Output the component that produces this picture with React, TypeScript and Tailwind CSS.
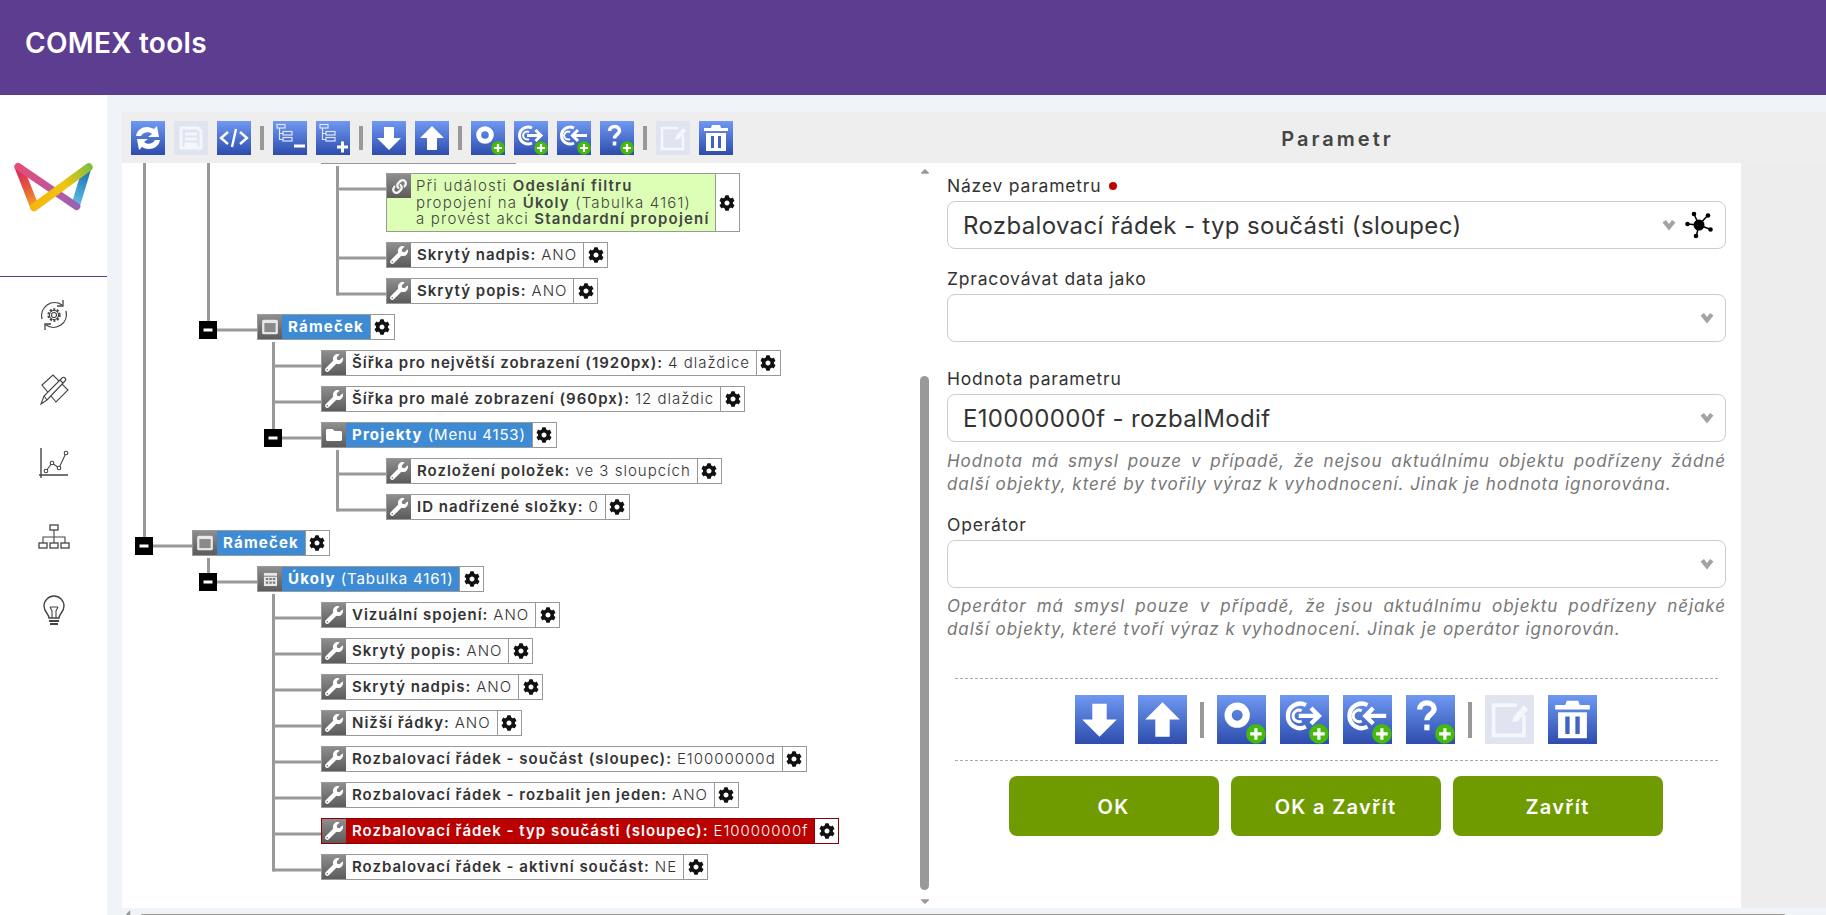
import type { ReactNode } from "react";
import { FaCog, FaWrench, FaLink, FaFolder, FaCaretUp, FaCaretDown, FaCaretLeft } from "react-icons/fa";

const FONT = "[font-family:Inter,'Noto_Sans',sans-serif]";

function Tool({ size = 34, disabled, children }: { size?: number; disabled?: boolean; children: ReactNode }) {
  return (
    <div
      className={
        disabled
          ? "shrink-0 bg-[#dfe4f0]"
          : "shrink-0 bg-gradient-to-b from-[#7099f2] to-[#2e4cad]"
      }
      style={{ width: size, height: size }}
    >
      <svg viewBox="0 0 34 34" width={size} height={size}>
        {children}
      </svg>
    </div>
  );
}

function Plus() {
  return (
    <g>
      <circle cx="27" cy="27" r="6.8" fill="#45b90c" />
      <path d="M27 23v8M23 27h8" stroke="#fff" strokeWidth="2.2" />
    </g>
  );
}

const Refresh = (
  <g fill="#fff">
    <path d="M5 15c1-6 6-9 11-9 3 0 5 1 7 2l3-3 2 11H17l4-3c-3-3-9-2-11 2z" />
    <path d="M29 19c-1 6-6 9-11 9-3 0-5-1-7-2l-3 3-2-11h11l-4 3c3 3 9 2 11-2z" />
  </g>
);
const Save = (
  <g fill="none" stroke="#f4f6fb" strokeWidth="3">
    <path d="M7 7h17l3 3v17H7z" />
    <path d="M11 13h12M11 18h12" />
    <path d="M12 27v-4h10v4" fill="#f4f6fb" />
  </g>
);
const Code = (
  <g fill="none" stroke="#fff" strokeWidth="2.4">
    <path d="M11 11l-7 6 7 6M23 11l7 6-7 6M19 8l-4 18" />
  </g>
);
const TreeBase = (
  <g fill="none" stroke="#dfe7fb" strokeWidth="1.2">
    <rect x="4" y="3.5" width="8" height="3.5" />
    <rect x="10" y="10.5" width="9" height="3.5" />
    <rect x="10" y="16.5" width="9" height="3.5" />
    <path d="M6.5 7v11.5H10M6.5 12.5H10" />
  </g>
);
const ArrowDown = <path d="M12 6h10v11h7L17 29 5 17h7z" fill="#fff" />;
const ArrowUp = <path d="M12 29h10V17h7L17 5 5 17h7z" fill="#fff" />;
const Ring = <circle cx="14" cy="14" r="6.300" fill="none" stroke="#fff" strokeWidth="5" />;
const RingRight = (
  <g fill="none" stroke="#fff" strokeWidth="3">
    <path d="M18 7a8.500 8.500 0 1 0 0 15" />
    <path d="M15 11a4 4 0 1 0 0 7" strokeWidth="2" />
    <path d="M13 14.500h14M21.500 9l5.500 5.500-5.500 5.500" />
  </g>
);
const RingLeft = (
  <g fill="none" stroke="#fff" strokeWidth="3">
    <path d="M17 7a8.500 8.500 0 1 0 0 15" />
    <path d="M13 11a4 4 0 1 0 0 7" strokeWidth="2" />
    <path d="M30 14.500H15M21 9l-5.500 5.500L21 20" />
  </g>
);
const Question = (
  <g fill="none" stroke="#fff" strokeWidth="3.600">
    <path d="M9.500 10c0-3 2.500-4.500 5-4.500s5 1.500 5 4.300c0 3.700-5 3.700-5 7.700" />
    <path d="M14.500 20.500v4" />
  </g>
);
const Edit = (
  <g fill="none" stroke="#f5f7fc" strokeWidth="2.500">
    <path d="M22 7H6v21h21V14" />
    <path d="M20 15l7-8 3 3-7 8-4 1z" fill="#f5f7fc" stroke="none" />
  </g>
);
const Trash = (
  <g fill="#fff">
    <path d="M13 4h8l1 3h7v3H5V7h7z" />
    <path d="M7 12h20v18H7z" />
    <path d="M12 15h3v12h-3zM19 15h3v12h-3z" fill="#3f63c3" />
  </g>
);

function TopToolbar() {
  return (
    <div className="flex w-[810px] items-center gap-[9px] pl-[9px]">
      <Tool>{Refresh}</Tool>
      <Tool disabled>{Save}</Tool>
      <Tool>{Code}</Tool>
      <div className="h-[24px] w-[4px] bg-[#999]" />
      <Tool>
        {TreeBase}
        <path d="M21 25h11" stroke="#fff" strokeWidth="3" />
      </Tool>
      <Tool>
        {TreeBase}
        <path d="M21 26h11M26.500 20.500v11" stroke="#fff" strokeWidth="3" />
      </Tool>
      <div className="h-[24px] w-[4px] bg-[#999]" />
      <Tool>{ArrowDown}</Tool>
      <Tool>{ArrowUp}</Tool>
      <div className="h-[24px] w-[4px] bg-[#999]" />
      <Tool>{Ring}<Plus /></Tool>
      <Tool>{RingRight}<Plus /></Tool>
      <Tool>{RingLeft}<Plus /></Tool>
      <Tool>{Question}<Plus /></Tool>
      <div className="h-[24px] w-[4px] bg-[#999]" />
      <Tool disabled>{Edit}</Tool>
      <Tool>{Trash}</Tool>
    </div>
  );
}

function FormToolbar() {
  return (
    <div className="flex items-center justify-center gap-[14px] py-[16px] pr-[2px]">
      <Tool size={49}>{ArrowDown}</Tool>
      <Tool size={49}>{ArrowUp}</Tool>
      <div className="mx-[-1px] h-[36px] w-[4px] bg-[#999]" />
      <Tool size={49}>{Ring}<Plus /></Tool>
      <Tool size={49}>{RingRight}<Plus /></Tool>
      <Tool size={49}>{RingLeft}<Plus /></Tool>
      <Tool size={49}>{Question}<Plus /></Tool>
      <div className="mx-[-1px] h-[36px] w-[4px] bg-[#999]" />
      <Tool size={49} disabled>{Edit}</Tool>
      <Tool size={49}>{Trash}</Tool>
    </div>
  );
}

function Logo() {
  return (
    <svg viewBox="40 215 240 155" width="80" height="52">
      <defs>
        <linearGradient id="lg-left" gradientUnits="userSpaceOnUse" x1="50" y1="225" x2="100" y2="355">
          <stop offset="0" stopColor="#d81f5d" />
          <stop offset="0.5" stopColor="#e4553f" />
          <stop offset="1" stopColor="#f7a823" />
        </linearGradient>
        <linearGradient id="lg-pink" gradientUnits="userSpaceOnUse" x1="50" y1="225" x2="230" y2="350">
          <stop offset="0" stopColor="#e94a78" />
          <stop offset="1" stopColor="#9a62b5" />
        </linearGradient>
        <linearGradient id="lg-right" gradientUnits="userSpaceOnUse" x1="265" y1="240" x2="225" y2="350">
          <stop offset="0" stopColor="#1c6fb5" />
          <stop offset="1" stopColor="#5fc6ea" />
        </linearGradient>
        <linearGradient id="lg-yellow" gradientUnits="userSpaceOnUse" x1="95" y1="350" x2="270" y2="225">
          <stop offset="0" stopColor="#f6b60d" />
          <stop offset="0.55" stopColor="#f1c40f" />
          <stop offset="1" stopColor="#7fbf3f" />
        </linearGradient>
      </defs>
      <path d="M54 228l48 122" stroke="url(#lg-left)" strokeWidth="26" fill="none" />
      <path d="M259 232l-35 116" stroke="url(#lg-right)" strokeWidth="26" fill="none" />
      <path d="M52 228l176 120" stroke="url(#lg-pink)" strokeWidth="22" fill="none" strokeLinecap="round" />
      <path d="M100 350l164-120" stroke="url(#lg-yellow)" strokeWidth="24" fill="none" strokeLinecap="round" />
    </svg>
  );
}

function SideIcon({ children }: { children: ReactNode }) {
  return (
    <svg viewBox="0 0 32 32" width="32" height="32" fill="none" stroke="#444" strokeWidth="1.100">
      {children}
    </svg>
  );
}

function Sidebar() {
  return (
    <aside className="flex w-[107px] shrink-0 flex-col bg-white">
      <div className="flex h-[182px] items-center justify-center border-b border-[#5c3d8f] pt-[4px]">
        <Logo />
      </div>
      <div className="flex flex-col items-center gap-[42px] pt-[22px]">
        <SideIcon>
          <path d="M4 20a13 13 0 0 1 20-14M28 12a13 13 0 0 1-20 14" strokeWidth="1.300" />
          <path d="M25 1v6h-6M7 31v-6h6" strokeWidth="1.300" />
          <circle cx="16" cy="16" r="2.500" />
          <circle cx="16" cy="16" r="5.500" strokeWidth="2.400" strokeDasharray="2 1.500" />
          <circle cx="16" cy="16" r="4.500" />
        </SideIcon>
        <SideIcon>
          <path d="M4 12l11-10 15 15-12 12z" />
          <path d="M3 31l3-8L24 5c2-2 5 1 3 3L9 27z" fill="#fff" />
          <path d="M22 7l3 3M6 23l3 4" />
        </SideIcon>
        <SideIcon>
          <path d="M3 1v30M1 28h29" strokeWidth="1.400" />
          <path d="M8 24l6-8 7 5 7-15" />
          <circle cx="8" cy="24" r="1.800" fill="#fff" />
          <circle cx="14" cy="16" r="1.800" fill="#fff" />
          <circle cx="21" cy="21" r="1.800" fill="#fff" />
          <circle cx="28" cy="6" r="1.800" fill="#fff" />
        </SideIcon>
        <SideIcon>
          <rect x="12" y="4" width="8" height="5" strokeWidth="1.300" />
          <rect x="1" y="22" width="8" height="5" strokeWidth="1.300" />
          <rect x="12" y="22" width="8" height="5" strokeWidth="1.300" />
          <rect x="23" y="22" width="8" height="5" strokeWidth="1.300" />
          <path d="M16 9v13M5 22v-6h22v6" />
        </SideIcon>
        <SideIcon>
          <path d="M11 23c0-4-5-6-5-12a10 10 0 0 1 20 0c0 6-5 8-5 12z" strokeWidth="1.400" />
          <path d="M12 12l2 4v7M20 12l-2 4v7M12 12h8" />
          <path d="M11 26h10M12 29h8" strokeWidth="2" />
        </SideIcon>
      </div>
    </aside>
  );
}

type Row = {
  ml: string;
  icon: "wrench" | "window" | "folder" | "table" | "link";
  label?: string;
  value?: string;
  blue?: boolean;
  red?: boolean;
  green?: boolean;
};

const rows: Row[] = [
  { ml: "ml-[264px]", icon: "link", green: true },
  { ml: "ml-[264px]", icon: "wrench", label: "Skrytý nadpis:", value: "ANO" },
  { ml: "ml-[264px]", icon: "wrench", label: "Skrytý popis:", value: "ANO" },
  { ml: "ml-[135px]", icon: "window", label: "Rámeček", blue: true },
  { ml: "ml-[199px]", icon: "wrench", label: "Šířka pro největší zobrazení (1920px):", value: "4 dlaždice" },
  { ml: "ml-[199px]", icon: "wrench", label: "Šířka pro malé zobrazení (960px):", value: "12 dlaždic" },
  { ml: "ml-[199px]", icon: "folder", label: "Projekty", value: "(Menu 4153)", blue: true },
  { ml: "ml-[264px]", icon: "wrench", label: "Rozložení položek:", value: "ve 3 sloupcích" },
  { ml: "ml-[264px]", icon: "wrench", label: "ID nadřízené složky:", value: "0" },
  { ml: "ml-[70px]", icon: "window", label: "Rámeček", blue: true },
  { ml: "ml-[135px]", icon: "table", label: "Úkoly", value: "(Tabulka 4161)", blue: true },
  { ml: "ml-[199px]", icon: "wrench", label: "Vizuální spojení:", value: "ANO" },
  { ml: "ml-[199px]", icon: "wrench", label: "Skrytý popis:", value: "ANO" },
  { ml: "ml-[199px]", icon: "wrench", label: "Skrytý nadpis:", value: "ANO" },
  { ml: "ml-[199px]", icon: "wrench", label: "Nižší řádky:", value: "ANO" },
  { ml: "ml-[199px]", icon: "wrench", label: "Rozbalovací řádek - součást (sloupec):", value: "E10000000d" },
  { ml: "ml-[199px]", icon: "wrench", label: "Rozbalovací řádek - rozbalit jen jeden:", value: "ANO" },
  { ml: "ml-[199px]", icon: "wrench", label: "Rozbalovací řádek - typ součásti (sloupec):", value: "E10000000f", red: true },
  { ml: "ml-[199px]", icon: "wrench", label: "Rozbalovací řádek - aktivní součást:", value: "NE" },
];

function NodeIcon({ icon }: { icon: Row["icon"] }) {
  return (
    <div className="flex h-[24px] w-[24px] shrink-0 items-center justify-center bg-gradient-to-b from-[#8e8e8e] to-[#5c5c5c] text-white">
      {icon === "wrench" && <FaWrench size={18} />}
      {icon === "link" && <FaLink className="text-[#f3f3f3]" size={15} />}
      {icon === "folder" && <FaFolder size={16} />}
      {icon === "window" && (
        <svg viewBox="0 0 16 16" width="18" height="18">
          <rect x="1" y="1.500" width="14" height="13" rx="1.500" fill="#e8e8e8" />
          <rect x="3" y="4.500" width="10" height="8" fill="#8a8a8a" />
        </svg>
      )}
      {icon === "table" && (
        <svg viewBox="0 0 16 16" width="15" height="15">
          <rect x="1" y="1" width="14" height="14" fill="#e8e8e8" />
          <path d="M1 4.500h14" stroke="#777" />
          <path d="M3 6.500h2.500v2H3zM6.800 6.500h2.500v2H6.800zM10.500 6.500H13v2h-2.500zM3 10h2.500v2.500H3zM6.800 10h2.500v2.500H6.800zM10.500 10H13v2.500h-2.500z" fill="#777" />
        </svg>
      )}
    </div>
  );
}

function TreeNode({ row }: { row: Row }) {
  const border = row.red ? "border-[#8b0000]" : "border-[#999]";
  const bg = row.red
    ? "bg-[#bb0000] text-white"
    : row.blue
      ? "bg-[#3d8bd4] text-white"
      : row.green
        ? "bg-[#ddffb5] text-[#444]"
        : "bg-[#fdfdfd] text-[#333]";
  return (
    <div className={`flex w-fit border ${border} ${row.ml} ${bg}`}>
      <NodeIcon icon={row.icon} />
      {row.green ? (
        <div className="h-[57px] whitespace-nowrap px-[5px] pt-[4px] text-[15px] font-light leading-[16.500px] tracking-[1.200px]">
          Při události <b className="font-semibold">Odeslání filtru</b>
          <br />
          propojení na <b className="font-semibold">Úkoly</b> (Tabulka 4161)
          <br />
          a provést akci <b className="font-semibold">Standardní propojení</b>
        </div>
      ) : (
        <div className="flex h-[24px] items-center whitespace-nowrap px-[6px] text-[15px] tracking-[1px]">
          <span className={row.blue ? "font-bold tracking-[1.200px]" : "font-semibold"}>{row.label}</span>
          {row.value && (
            <span className={row.blue ? "ml-[5px] font-normal tracking-[0.800px]" : "ml-[5px] font-light"}>{row.value}</span>
          )}
        </div>
      )}
      <div className={`flex w-[24px] shrink-0 items-center justify-center self-stretch border-l ${border} bg-white text-[#111]`}>
        <FaCog size={16} />
      </div>
    </div>
  );
}

const verticals = [
  [144.5, 163, 537],
  [208.5, 163, 321],
  [337.5, 166, 295.5],
  [273.5, 342, 429],
  [337.5, 450, 511.5],
  [208.5, 558, 573],
  [273.5, 594, 871.5],
];
const horizontals = [
  [189, 337, 386],
  [258, 337, 386],
  [294, 337, 386],
  [330, 217, 257],
  [366, 273, 321],
  [402, 273, 321],
  [438, 282, 321],
  [474, 337, 386],
  [510, 337, 386],
  [546, 153, 192],
  [582, 217, 257],
  [618, 273, 321],
  [654, 273, 321],
  [690, 273, 321],
  [726, 273, 321],
  [762, 273, 321],
  [798, 273, 321],
  [834, 273, 321],
  [870, 273, 321],
];
const minusBoxes = [
  [135, 537],
  [199, 321],
  [264, 429],
  [199, 573],
];

function Tree() {
  return (
    <div className="relative w-[795px] shrink-0 overflow-hidden bg-white pt-[10px]">
      <svg className="pointer-events-none absolute inset-0" viewBox="122 163 795 745" width="795" height="745">
        <path d="M321 163.500h195" stroke="#999" />
        {verticals.map(([x, y1, y2]) => (
          <path key={`${x}-${y1}`} d={`M${x} ${y1}V${y2}`} stroke="#999" strokeWidth="3" />
        ))}
        {horizontals.map(([y, x1, x2]) => (
          <path key={y} d={`M${x1} ${y}H${x2}`} stroke="#999" strokeWidth="3" />
        ))}
        {minusBoxes.map(([x, y]) => (
          <g key={`${x}-${y}`}>
            <rect x={x} y={y} width="18" height="18" fill="#000" />
            <rect x={x + 4.5} y={y + 7.5} width="9" height="3" fill="#fff" />
          </g>
        ))}
      </svg>
      <div className="relative flex flex-col gap-[10px]">
        {rows.map((row, i) => (
          <TreeNode key={i} row={row} />
        ))}
      </div>
    </div>
  );
}

function Chevron({ className }: { className: string }) {
  return (
    <svg viewBox="0 0 14 12" width="14" height="12" className={className}>
      <path d="M0.500 3.500L4 1 7 5 10 1 13.500 3.500 7 11.500z" fill="#a3a3a3" />
    </svg>
  );
}

function Select({ value, extra }: { value?: string; extra?: boolean }) {
  return (
    <div className="flex h-[48px] items-center rounded-[8px] border border-[#ccc] bg-white pl-[15px] pr-[10px]">
      <span className="flex-1 pt-[2px] text-[24px] tracking-[0.340px] text-[#333]">{value}</span>
      <Chevron className={extra ? "mr-[9px]" : "mr-[1px]"} />
      {extra && (
        <svg viewBox="0 0 28 28" width="28" height="28" className="mr-[2px]">
          <g stroke="#000" strokeWidth="1.500">
            <path d="M14 14L9 3M14 14L23 4M14 14L2 13M14 14L27 19M14 14L11 26" />
          </g>
          <circle cx="14" cy="14" r="5.500" />
          <circle cx="9" cy="3" r="2.300" />
          <circle cx="23" cy="4.500" r="2.300" />
          <circle cx="2.500" cy="13" r="2.300" />
          <circle cx="25.500" cy="18.500" r="2.300" />
          <circle cx="11" cy="25" r="2.300" />
        </svg>
      )}
    </div>
  );
}

function Label({ className, children }: { className: string; children: ReactNode }) {
  return <div className={`h-[24px] pt-[1px] text-[17.500px] leading-[24px] tracking-[0.800px] text-[#333] ${className}`}>{children}</div>;
}

function Hint({ className, children }: { className: string; children: ReactNode }) {
  return (
    <p className={`text-justify text-[17px] italic leading-[22.500px] tracking-[0.950px] text-[#777] ${className}`}>{children}</p>
  );
}

function GreenButton({ children }: { children: ReactNode }) {
  return (
    <button className="h-[60px] w-[210px] rounded-[8px] bg-[#6f9b00] pt-[2px] text-[20px] font-semibold tracking-[1.300px] text-white">
      {children}
    </button>
  );
}

function Form() {
  return (
    <div className="w-[809px] shrink-0 bg-white pl-[15px] pr-[15px] pt-[10px]">
      <Label className="mb-[4px] flex items-center gap-[8px]">
        Název parametru <span className="h-[8px] w-[8px] rounded-full bg-[#c00000]" />
      </Label>
      <Select value="Rozbalovací řádek - typ součásti (sloupec)" extra />
      <Label className="mb-[4px] mt-[17px]">Zpracovávat data jako</Label>
      <Select />
      <Label className="mb-[4px] mt-[24px]">Hodnota parametru</Label>
      <Select value="E10000000f - rozbalModif" />
      <Hint className="mt-[8px]">
        Hodnota má smysl pouze v případě, že nejsou aktuálnímu objektu podřízeny žádné další objekty, které by tvořily výraz k vyhodnocení. Jinak je hodnota ignorována.
      </Hint>
      <Label className="mb-[4px] mt-[17px]">Operátor</Label>
      <Select />
      <Hint className="mt-[7px]">
        Operátor má smysl pouze v případě, že jsou aktuálnímu objektu podřízeny nějaké další objekty, které tvoří výraz k vyhodnocení. Jinak je operátor ignorován.
      </Hint>
      <div className="mx-[8px] mt-[38px] border-y border-dashed border-y-[#aaa]">
        <FormToolbar />
      </div>
      <div className="mt-[15px] flex justify-center gap-[12px] pr-[2px]">
        <GreenButton>OK</GreenButton>
        <GreenButton>OK a Zavřít</GreenButton>
        <GreenButton>Zavřít</GreenButton>
      </div>
    </div>
  );
}

export default function App() {
  return (
    <div className={`flex h-screen flex-col overflow-hidden bg-[#f0f3f7] ${FONT}`}>
      <header className="flex h-[95px] shrink-0 items-center bg-[#5c3d8f] pb-[9px] pl-[25px]">
        <h1 className="text-[28px] font-semibold tracking-[0.300px] text-white">COMEX tools</h1>
      </header>
      <div className="flex min-h-0 flex-1">
        <Sidebar />
        <main className="flex min-w-0 flex-1 flex-col pl-[15px] pt-[17px]">
          <div className="flex h-[51px] shrink-0 items-center bg-[#eee]">
            <TopToolbar />
            <div className="w-[811px] pt-[3px] text-center text-[20px] font-semibold tracking-[3px] text-[#444]">Parametr</div>
          </div>
          <div className="flex h-[745px] shrink-0 bg-[#ededed]">
            <Tree />
            <div className="flex w-[15px] shrink-0 flex-col items-center bg-white text-[#999]">
              <FaCaretUp size={14} className="mt-[1px]" />
              <div className="mt-[198px] h-[514px] w-[9px] rounded-[5px] bg-[#999]" />
              <FaCaretDown size={14} className="mt-[4px]" />
            </div>
            <Form />
          </div>
          <div className="flex flex-1 items-end">
            <FaCaretLeft size={12} className="mb-[-2px] text-[#999]" />
            <div className="ml-[6px] h-[4px] w-[1646px] rounded-t-[3px] bg-[#999]" />
          </div>
        </main>
      </div>
    </div>
  );
}
